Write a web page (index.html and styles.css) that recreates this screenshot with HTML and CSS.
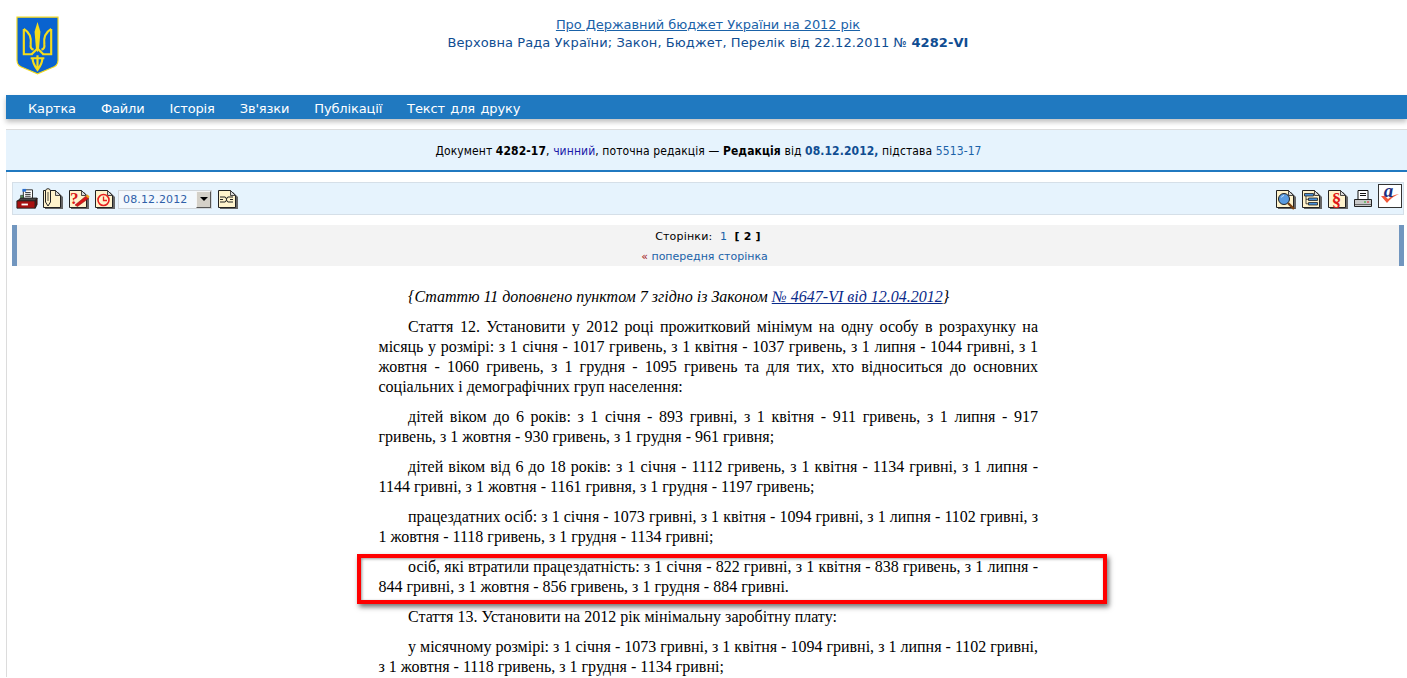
FILE: index.html
```html
<!DOCTYPE html>
<html lang="uk">
<head>
    <meta charset="UTF-8">
    <title>Про Державний бюджет України на 2012 рік</title>
    <link rel="stylesheet" href="styles.css">
</head>
<body>
    <svg class="defs" width="0" height="0">
        <symbol id="sheet" viewBox="0 0 22 22">
            <path d="M3 4h13l5 5v12H3z" fill="#666"/>
            <path d="M1.500 2.500h12l5 5v12h-17z" fill="#fff3cc" stroke="#222"/>
            <path d="M13.500 2.500v5h5z" fill="#d8d8d8" stroke="#222" stroke-width=".8"/>
        </symbol>
    </svg>

    <div class="header">
        <svg class="trident" viewBox="0 0 44 60">
            <path d="M1 1h42v44q0 6-7 8l-14 6-14-6q-7-2-7-8z" fill="#0a63cf" stroke="#f0d820" stroke-width="1.200"/>
            <path d="M22 6l3 10-1.500 18-1.500 3-1.500-3-1.500-18z" fill="#f5dc1a"/>
            <g fill="none" stroke="#f5dc1a" stroke-width="2.200">
                <path d="M8 13v26h9M8 13c5 3 8 9 7 16-.5 3 1 5 3 5"/>
                <path d="M36 13v26h-9M36 13c-5 3-8 9-7 16 .5 3-1 5-3 5"/>
                <path d="M16 39l6-6 6 6"/>
                <path d="M15 43h14M17 43c0 5 2 8 5 12 3-4 5-7 5-12M22 40v15"/>
            </g>
        </svg>
        <div class="title">
            <a class="title-link" href="#">Про Державний бюджет України на 2012 рік</a><br>
            <span class="title-sub">Верховна Рада України; Закон, Бюджет, Перелік від 22.12.2011 № <b>4282-VI</b></span>
        </div>
    </div>

    <div class="menu">
        <a href="#">Картка</a>
        <a href="#">Файли</a>
        <a href="#">Історія</a>
        <a href="#">Зв'язки</a>
        <a href="#">Публікації</a>
        <a href="#">Текст для друку</a>
    </div>

    <div class="content">
        <div class="doc-info">
            Документ <b>4282-17</b>, <a class="status" href="#">чинний</a>, поточна редакція — <b>Редакція</b> від <b class="date">08.12.2012,</b> підстава <a href="#">5513-17</a>
        </div>

        <div class="toolbar">
            <div class="tools">
                <svg class="icon" viewBox="0 0 24 24">
                    <path d="M8 2h10v11H8z" fill="#fff" stroke="#222"/>
                    <path d="M10 5h6M10 7h6M10 9h6" stroke="#222"/>
                    <path d="M7 1h4v3H7z" fill="#2a6fd0"/>
                    <path d="M5 8h3v5H5z" fill="#5a9a5a" stroke="#222" stroke-width=".6"/>
                    <path d="M2 14l3-3h18l-2 3z" fill="#444" stroke="#222"/>
                    <path d="M1 14h20v8H1z" fill="#a81010" stroke="#222"/>
                    <path d="M21 14l2-3v7l-2 4z" fill="#600" stroke="#222"/>
                    <path d="M6 17h7v2H6z" fill="#fff"/>
                </svg>
                <svg class="icon" viewBox="0 0 22 22">
                    <use href="#sheet"/>
                    <path d="M3.500 5V3c0-3 5-3 5 0v11l-2.500 4-2.500-4V5" fill="#fff3cc" stroke="#222" stroke-width="1"/>
                    <path d="M6 4v9" stroke="#222" stroke-width=".8"/>
                </svg>
                <svg class="icon" viewBox="0 0 22 22">
                    <use href="#sheet"/>
                    <text class="glyph-q" x="2" y="15.500">?</text>
                    <path d="M7 17l11-9 2.500 2.500-11 8z" fill="#d81818" stroke="#801010" stroke-width=".5"/>
                    <path d="M17.500 8l2-1.500 2 2-1 2z" fill="#f0a020"/>
                </svg>
                <svg class="icon" viewBox="0 0 22 22">
                    <use href="#sheet"/>
                    <circle cx="9.500" cy="12" r="5.500" fill="#fff3cc" stroke="#e82020" stroke-width="1.600"/>
                    <path d="M9.500 8.500V12.500h3.500" fill="none" stroke="#e82020" stroke-width="1.300"/>
                </svg>
                <div class="date-select">
                    <span>08.12.2012</span>
                    <i class="arrow"></i>
                </div>
                <svg class="icon" viewBox="0 0 22 22">
                    <use href="#sheet"/>
                    <path d="M3 9h5M11 9h5M3 11.500h3M13 11.500h3M3 14h5M11 14h5" stroke="#222" stroke-width="1.100" fill="none"/>
                    <path d="M8 9c2 0 1 5 3 5M8 14c2 0 1-5 3-5" stroke="#222" stroke-width="1" fill="none"/>
                </svg>
            </div>
            <div class="tools">
                <svg class="icon" viewBox="0 0 22 22">
                    <use href="#sheet"/>
                    <circle cx="9" cy="11" r="5.500" fill="#5a9be0" stroke="#222"/>
                    <path d="M6.500 9.500a3 3 0 0 1 2.500-2" stroke="#cfe4fa" fill="none"/>
                    <path d="M13 15l6 6" stroke="#7a4010" stroke-width="2.400"/>
                </svg>
                <svg class="icon" viewBox="0 0 22 22">
                    <use href="#sheet"/>
                    <path d="M3.500 5.500h9v2.500h-9zM7.500 10h9v2.500h-9zM7.500 14.500h9v2.500h-9z" fill="#4a90d8" stroke="#222" stroke-width=".8"/>
                    <path d="M5 8v7.800h2.500M5 11.300h2.500" fill="none" stroke="#222" stroke-width=".8"/>
                </svg>
                <svg class="icon" viewBox="0 0 22 22">
                    <use href="#sheet"/>
                    <text class="glyph-s" x="9.500" y="17.500">§</text>
                </svg>
                <svg class="icon printer" viewBox="0 0 20 20">
                    <path d="M5 1.500h10v9H5z" fill="#fff" stroke="#111"/>
                    <path d="M7 4.500h6M7 6.500h6" stroke="#111"/>
                    <path d="M1.500 10.500h17v7h-17z" fill="#c8c8c8" stroke="#222"/>
                    <path d="M2 15.500h16" stroke="#666"/>
                    <path d="M11 13h2" stroke="#2a2"/>
                    <path d="M14 13h2" stroke="#d22"/>
                </svg>
                <div class="check-box">
                    <svg viewBox="0 0 22 22" width="22" height="22">
                        <path d="M2 11l6 7c3-4 7-7 12-9-5 .5-8 2.500-11 5l-3-3z" fill="#f0583a"/>
                        <text class="glyph-a" x="9.500" y="12">a</text>
                    </svg>
                </div>
            </div>
        </div>

        <div class="pages">
            <div class="page-list">Сторінки: &nbsp;<a href="#">1</a>&nbsp; <b>[ 2 ]</b></div>
            <div class="prev"><span>«</span> <a href="#">попередня сторінка</a></div>
        </div>

        <div class="law">
            <p><i>{Статтю 11 доповнено пунктом 7 згідно із Законом <a href="#">№ 4647-VI від 12.04.2012</a>}</i></p>
            <p>Стаття 12. Установити у 2012 році прожитковий мінімум на одну особу в розрахунку на місяць у розмірі: з 1 січня - 1017 гривень, з 1 квітня - 1037 гривень, з 1 липня - 1044 гривні, з 1 жовтня - 1060 гривень, з 1 грудня - 1095 гривень та для тих, хто відноситься до основних соціальних і демографічних груп населення:</p>
            <p>дітей віком до 6 років: з 1 січня - 893 гривні, з 1 квітня - 911 гривень, з 1 липня - 917 гривень, з 1 жовтня - 930 гривень, з 1 грудня - 961 гривня;</p>
            <p>дітей віком від 6 до 18 років: з 1 січня - 1112 гривень, з 1 квітня - 1134 гривні, з 1 липня - 1144 гривні, з 1 жовтня - 1161 гривня, з 1 грудня - 1197 гривень;</p>
            <p>працездатних осіб: з 1 січня - 1073 гривні, з 1 квітня - 1094 гривні, з 1 липня - 1102 гривні, з 1 жовтня - 1118 гривень, з 1 грудня - 1134 гривні;</p>
            <p>осіб, які втратили працездатність: з 1 січня - 822 гривні, з 1 квітня - 838 гривень, з 1 липня - 844 гривні, з 1 жовтня - 856 гривень, з 1 грудня - 884 гривні.</p>
            <p>Стаття 13. Установити на 2012 рік мінімальну заробітну плату:</p>
            <p>у місячному розмірі: з 1 січня - 1073 гривні, з 1 квітня - 1094 гривні, з 1 липня - 1102 гривні, з 1 жовтня - 1118 гривень, з 1 грудня - 1134 гривні;</p>
        </div>
    </div>

    <div class="highlight"></div>
</body>
</html>
```

FILE: styles.css
```css
html {
    overflow: hidden;
}
body {
    margin: 0;
    background-color: #ffffff;
    font-family: "DejaVu Sans", Verdana, sans-serif;
    font-size: 12px;
    color: #000;
    height: 678px;
    overflow: hidden;
    position: relative;
}
a {
    color: #1a62a8;
    text-decoration: none;
}
.defs {
    position: absolute;
}
.header {
    height: 95px;
    position: relative;
    display: flex;
    justify-content: center;
}
.trident {
    position: absolute;
    left: 16px;
    top: 16px;
    width: 43px;
    height: 59px;
}
.title {
    padding-top: 16px;
    padding-left: 9px;
    text-align: center;
    font-size: 13px;
    line-height: 18px;
    color: #0f4d92;
}
.title-link {
    text-decoration: underline;
    letter-spacing: -0.07px;
}
.title-sub {
    letter-spacing: 0.08px;
}
.menu {
    margin-left: 6px;
    height: 24px;
    background-color: #2079c0;
    box-shadow: 0 3px 5px rgba(0, 0, 0, 0.25);
    display: flex;
    gap: 25px;
    padding-left: 22px;
    align-items: center;
}
.menu a {
    color: #ffffff;
    font-size: 13px;
    padding-top: 3px;
    letter-spacing: -0.15px;
    word-spacing: 1.5px;
}
.content {
    margin-left: 6px;
    margin-top: 10px;
    border-left: 1px solid #dcdcdc;
    border-top: 1px solid #dcdcdc;
}
.doc-info {
    height: 40px;
    line-height: 42px;
    background-color: #e6f3fd;
    border-bottom: 2px solid #2079c0;
    text-align: center;
    font-size: 12px;
    font-stretch: condensed;
    letter-spacing: 0.1px;
    margin-left: -1px;
    padding-left: 4px;
}
.doc-info .status {
    color: #1a1aa8;
}
.doc-info .date {
    color: #0f4d92;
}
.toolbar {
    margin: 10px 3px 0 5px;
    height: 31px;
    border: 1px solid #d5dfe8;
    background-color: #e6f3fd;
    display: flex;
    justify-content: space-between;
    align-items: center;
    padding: 0 1px 0 3px;
}
.tools {
    display: flex;
    align-items: center;
    gap: 4px;
}
.icon {
    width: 22px;
    height: 22px;
    overflow: visible;
}
.printer {
    width: 20px;
    height: 20px;
}
.glyph-q {
    font-family: "Liberation Serif", serif;
    font-weight: bold;
    font-size: 17px;
    fill: #d81818;
}
.glyph-s {
    font-family: "Liberation Serif", serif;
    font-weight: bold;
    font-size: 19px;
    fill: #e01818;
    text-anchor: middle;
}
.glyph-a {
    font-family: "Liberation Serif", serif;
    font-style: italic;
    font-weight: bold;
    font-size: 19px;
    fill: #1c2f80;
    text-anchor: middle;
}
.date-select {
    width: 94px;
    height: 19px;
    margin: 1px 1px 0 -2px;
    background-color: #f3f8fd;
    border: 1px solid #d0d5da;
    display: flex;
    justify-content: space-between;
    align-items: center;
    color: #2f5fa8;
    font-size: 11px;
    letter-spacing: 0.15px;
    padding-left: 4px;
    box-sizing: border-box;
}
.arrow {
    width: 15px;
    height: 17px;
    background-color: #d4d0c8;
    border: 1px solid;
    border-color: #f5f5f5 #555 #555 #f5f5f5;
    box-sizing: border-box;
    position: relative;
}
.arrow::after {
    content: "";
    position: absolute;
    left: 3px;
    top: 5px;
    border: 4px solid transparent;
    border-top: 4px solid #000;
}
.check-box {
    width: 24px;
    height: 24px;
    box-sizing: border-box;
    border: 1px solid #333;
    background-color: #fff;
    margin: -5px 0 0 1px;
}
.check-box svg {
    display: block;
    overflow: visible;
}
.pages {
    margin: 10px 3px 0 5px;
    height: 41px;
    background-color: #f3f3f3;
    border-left: 5px solid #7196bf;
    border-right: 5px solid #7196bf;
    text-align: center;
    font-size: 11px;
    line-height: 20px;
    box-sizing: border-box;
    padding-top: 2px;
}
.page-list {
    letter-spacing: 0.2px;
}
.prev {
    padding-right: 7px;
}
.prev span {
    color: #a01010;
}
.law {
    width: 659.5px;
    margin: 21px 0 0 371.5px;
    font-family: "Liberation Serif", "Times New Roman", serif;
    font-size: 16px;
    line-height: 20px;
    text-align: justify;
}
.law p {
    margin: 0 0 10px;
    text-indent: 29.5px;
}
.law a {
    color: #0a2a8a;
    text-decoration: underline;
}
.highlight {
    position: absolute;
    left: 357px;
    top: 554px;
    width: 742px;
    height: 42px;
    border: 4px solid #ff0000;
    box-shadow: 2px 3px 5px rgba(0, 0, 0, 0.55), inset 1px 1px 3px rgba(0, 0, 0, 0.4);
}
```
